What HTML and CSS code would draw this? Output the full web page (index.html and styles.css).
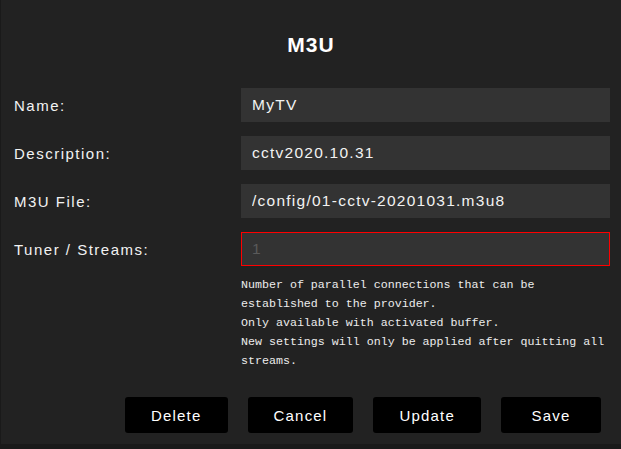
FILE: index.html
```html
<!DOCTYPE html>
<html>
<head>
<meta charset="utf-8">
<link rel="stylesheet" href="styles.css">
</head>
<body>
<div class="modal">
  <h1 class="title">M3U</h1>
  <div class="form">
    <label class="label">Name:</label>
    <div class="field"><input class="input" type="text" value="MyTV"></div>
    <label class="label">Description:</label>
    <div class="field"><input class="input" type="text" value="cctv2020.10.31"></div>
    <label class="label">M3U File:</label>
    <div class="field"><input class="input" type="text" value="/config/01-cctv-20201031.m3u8"></div>
    <label class="label">Tuner / Streams:</label>
    <div class="field field-invalid"><input class="input input-invalid" type="text" value="1" readonly></div>
    <div class="spacer"></div>
    <p class="help">Number of parallel connections that can be established to the provider.<br>Only available with activated buffer.<br>New settings will only be applied after quitting all streams.</p>
  </div>
  <div class="actions">
    <button class="btn">Delete</button>
    <button class="btn">Cancel</button>
    <button class="btn">Update</button>
    <button class="btn">Save</button>
  </div>
</div>
</body>
</html>
```
FILE: styles.css
```css
html, body {
  margin: 0;
  padding: 0;
  background: #1a1a1a;
  height: 100%;
  overflow: hidden;
}
.modal {
  margin-left: 1px;
  height: 444px;
  background: #222222;
  font-family: "Liberation Sans", Arial, sans-serif;
  color: #f2f2f2;
  padding-top: 33px;
  box-sizing: border-box;
}
.title {
  margin: 0;
  text-align: center;
  font-size: 21px;
  line-height: 23px;
  font-weight: bold;
  letter-spacing: 1px;
  color: #fff;
}
.form {
  display: grid;
  grid-template-columns: 227px 1fr;
  row-gap: 14px;
  padding: 0 11px 0 13px;
  margin-top: 32px;
}
.label {
  align-self: center;
  font-size: 15px;
  letter-spacing: 1.5px;
  color: #f2f2f2;
}
.field {
  display: flex;
}
.input {
  display: block;
  flex: 1;
  min-width: 0;
  box-sizing: border-box;
  height: 34px;
  margin: 0;
  border: 1px solid #333;
  background: #333333;
  color: #f2f2f2;
  font-family: "Liberation Sans", Arial, sans-serif;
  font-size: 15.5px;
  letter-spacing: 1.25px;
  padding: 0 10px;
  outline: none;
}
.field-invalid {
  border: 1px solid #ff0000;
  box-sizing: border-box;
  height: 34px;
}
.input.input-invalid {
  height: 32px;
  border: none;
  color: #5a5a5a;
  padding-left: 10px;
}
.help {
  margin: -5px 0 0 0;
  font-family: "Liberation Mono", "DejaVu Sans Mono", monospace;
  font-size: 11.65px;
  line-height: 19px;
  color: #ececec;
}
.actions {
  display: flex;
  justify-content: flex-end;
  gap: 20px;
  padding-right: 20px;
  margin-top: 27px;
}
.btn {
  min-width: 100px;
  height: 36px;
  padding: 0 26px;
  background: #000;
  color: #fff;
  border: none;
  border-radius: 3px;
  font-family: "Liberation Sans", Arial, sans-serif;
  font-size: 15px;
  letter-spacing: 1.2px;
}
```
